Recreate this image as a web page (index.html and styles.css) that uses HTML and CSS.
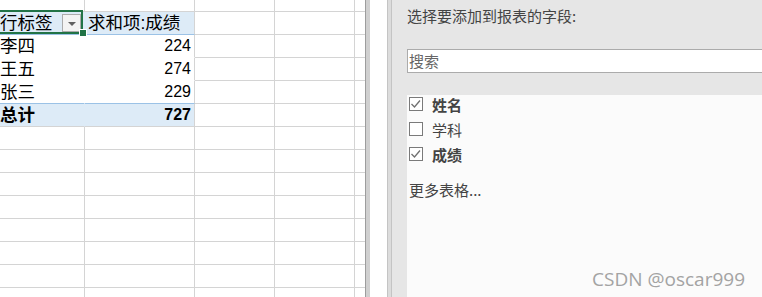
FILE: index.html
```html
<!DOCTYPE html>
<html lang="zh-CN">
<head>
  <meta charset="UTF-8">
  <meta name="viewport" content="width=device-width, initial-scale=1.0">
  <title>数据透视表字段</title>
  <link rel="stylesheet" href="styles.css">
</head>
<body>
  <div class="app">
    <div class="sheet">
      <div class="row top"><div class="c"></div><div class="c"></div><div class="c"></div><div class="c"></div><div class="c"></div></div>
      <div class="row">
        <div class="c pv-a pv-head sel">行标签<span class="drop"></span><span class="handle"></span></div>
        <div class="c pv-b pv-head">求和项:成绩</div>
        <div class="c"></div><div class="c"></div><div class="c"></div>
      </div>
      <div class="row">
        <div class="c pv-a">李四</div>
        <div class="c pv-b num">224</div>
        <div class="c"></div><div class="c"></div><div class="c"></div>
      </div>
      <div class="row">
        <div class="c pv-a">王五</div>
        <div class="c pv-b num">274</div>
        <div class="c"></div><div class="c"></div><div class="c"></div>
      </div>
      <div class="row">
        <div class="c pv-a pv-last">张三</div>
        <div class="c pv-b pv-last num">229</div>
        <div class="c"></div><div class="c"></div><div class="c"></div>
      </div>
      <div class="row">
        <div class="c pv-a pv-total">总计</div>
        <div class="c pv-b pv-total num">727</div>
        <div class="c"></div><div class="c"></div><div class="c"></div>
      </div>
      <div class="row"><div class="c"></div><div class="c"></div><div class="c"></div><div class="c"></div><div class="c"></div></div>
      <div class="row"><div class="c"></div><div class="c"></div><div class="c"></div><div class="c"></div><div class="c"></div></div>
      <div class="row"><div class="c"></div><div class="c"></div><div class="c"></div><div class="c"></div><div class="c"></div></div>
      <div class="row"><div class="c"></div><div class="c"></div><div class="c"></div><div class="c"></div><div class="c"></div></div>
      <div class="row"><div class="c"></div><div class="c"></div><div class="c"></div><div class="c"></div><div class="c"></div></div>
      <div class="row"><div class="c"></div><div class="c"></div><div class="c"></div><div class="c"></div><div class="c"></div></div>
      <div class="row"><div class="c"></div><div class="c"></div><div class="c"></div><div class="c"></div><div class="c"></div></div>
      <div class="row"><div class="c"></div><div class="c"></div><div class="c"></div><div class="c"></div><div class="c"></div></div>
    </div>

    <div class="split">
      <div class="split-edge"></div>
      <div class="split-gap"></div>
      <div class="split-edge pane-side"></div>
    </div>

    <div class="pane">
      <p class="pane-title">选择要添加到报表的字段:</p>
      <div class="search">搜索</div>
      <div class="fields">
        <div class="field on">
          <span class="box"><svg width="14" height="14" viewBox="0 0 14 14"><polyline points="2.5,7 5.5,10 11,3.5" fill="none" stroke="#707070" stroke-width="1.3"/></svg></span>
          姓名
        </div>
        <div class="field">
          <span class="box"></span>
          学科
        </div>
        <div class="field on">
          <span class="box"><svg width="14" height="14" viewBox="0 0 14 14"><polyline points="2.5,7 5.5,10 11,3.5" fill="none" stroke="#707070" stroke-width="1.3"/></svg></span>
          成绩
        </div>
        <p class="more">更多表格...</p>
      </div>
    </div>
  </div>

  <div class="watermark">CSDN @oscar999</div>
</body>
</html>
```

FILE: styles.css
```css
body {
  margin: 0;
  width: 762px;
  height: 297px;
  overflow: hidden;
  position: relative;
  font-family: "Liberation Sans", "Noto Sans CJK SC", sans-serif;
  background: #fff;
}
.app {
  display: flex;
  height: 297px;
}

/* worksheet */
.sheet {
  width: 365px;
  flex: none;
  overflow: hidden;
  background: #fff;
}
.row {
  display: grid;
  grid-template-columns: 85px 110px 80px 80px 10px;
  height: 23px;
}
.row.top {
  height: 12px;
}
.c {
  box-sizing: border-box;
  border-right: 1px solid #d4d4d4;
  border-bottom: 1px solid #d4d4d4;
  display: flex;
  align-items: center;
  font-size: 17.5px;
  line-height: 20px;
  color: #000;
  white-space: nowrap;
}
.c:last-child {
  border-right: none;
}
.pv-a {
  border-right-color: transparent;
  border-bottom-color: #fff;
  padding-left: 0;
}
.pv-b {
  border-bottom-color: #fff;
  padding-left: 3px;
}
.num {
  justify-content: flex-end;
  padding-right: 3px;
  font-size: 16px;
}
.pv-head {
  background: #ddebf7;
  border-bottom-color: #9bc2e6;
}
.pv-last {
  border-bottom-color: #9bc2e6;
}
.pv-total {
  background: #ddebf7;
  border-bottom-color: #d4d4d4;
  font-weight: bold;
}
.pv-a.pv-head {
  border-right-color: #ddebf7;
}
.sel {
  position: relative;
}
.sel::before {
  content: "";
  position: absolute;
  left: -2px;
  right: 1px;
  top: -2px;
  bottom: 0;
  border: 2px solid #217346;
}
.drop {
  margin-left: auto;
  margin-right: 3px;
  width: 19px;
  height: 18px;
  box-sizing: border-box;
  border: 1px solid #ababab;
  background: #f3f3f3;
  position: relative;
}
.drop::after {
  content: "";
  position: absolute;
  left: 5px;
  top: 7px;
  border-left: 4px solid transparent;
  border-right: 4px solid transparent;
  border-top: 4px solid #606060;
}
.handle {
  position: absolute;
  right: -3px;
  bottom: -3px;
  width: 6px;
  height: 6px;
  background: #217346;
  border: 1px solid #fff;
  z-index: 2;
}

/* splitter between sheet and pane */
.split {
  display: flex;
  flex: none;
}
.split-edge {
  width: 4px;
  border-left: 1px solid #9d9d9d;
  background: #d0d0d0;
}
.split-gap {
  width: 17px;
  background: #fff;
}
.split-edge.pane-side {
  width: 3px;
  border-left: 1px solid #c4c4c4;
  border-right: 1px solid #c4c4c4;
  background: #dcdcdc;
}

/* field list pane */
.pane {
  flex: 1;
  min-width: 0;
  overflow: hidden;
  background: #e6e6e6;
  padding-left: 15px;
  display: flex;
  flex-direction: column;
  font-family: "Noto Sans CJK SC", sans-serif;
  color: #444;
}
.pane-title {
  margin: 6px 0 0;
  font-size: 15px;
  line-height: 20px;
}
.search {
  margin-top: 23px;
  margin-right: -20px;
  height: 24px;
  box-sizing: border-box;
  border: 1px solid #ababab;
  background: #fff;
  padding-left: 1px;
  font-size: 15px;
  line-height: 21px;
  color: #666;
}
.fields {
  margin-top: 22px;
  flex: 1;
  background: #fbfbfb;
  padding-left: 2px;
}
.field {
  height: 25px;
  display: flex;
  align-items: flex-start;
  font-size: 15px;
  line-height: 20px;
}
.field.on {
  font-weight: bold;
}
.box {
  width: 14px;
  height: 14px;
  margin-top: 2px;
  margin-right: 9px;
  box-sizing: border-box;
  border: 1px solid #7a7a7a;
  background: #fff;
  display: flex;
  align-items: center;
  justify-content: center;
}
.box svg {
  display: block;
  flex: none;
}
.more {
  margin: 10px 0 0;
  font-size: 15px;
  line-height: 20px;
}

.watermark {
  position: absolute;
  right: 17px;
  bottom: 6px;
  font-family: "Open Sans", sans-serif;
  font-size: 19px;
  line-height: 24px;
  color: #a3a3a3;
}
```
